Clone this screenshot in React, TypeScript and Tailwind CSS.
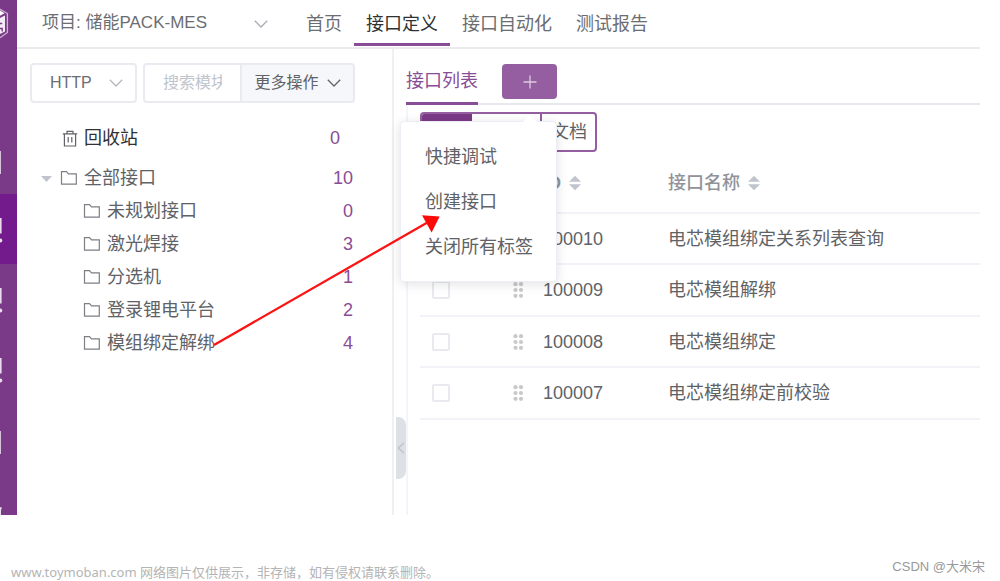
import type { JSX } from 'react';
import clsx from 'clsx';

interface IModule {
  name: string;
  count: number;
}

interface IApiRow {
  id: string;
  name: string;
}

const NAV_TABS = ['首页', '接口定义', '接口自动化', '测试报告'];
const ACTIVE_NAV = '接口定义';

const MODULES: IModule[] = [
  { name: '未规划接口', count: 0 },
  { name: '激光焊接', count: 3 },
  { name: '分选机', count: 1 },
  { name: '登录锂电平台', count: 2 },
  { name: '模组绑定解绑', count: 4 }
];

const API_ROWS: IApiRow[] = [
  { id: '100010', name: '电芯模组绑定关系列表查询' },
  { id: '100009', name: '电芯模组解绑' },
  { id: '100008', name: '电芯模组绑定' },
  { id: '100007', name: '电芯模组绑定前校验' }
];

const MENU_ITEMS = ['快捷调试', '创建接口', '关闭所有标签'];

const SIDE_ITEMS = [
  { label: '工作台', kind: 'bar' },
  { label: '接口测试', kind: 'dot', active: true },
  { label: '测试跟踪', kind: 'dot' },
  { label: '性能测试', kind: 'dot' },
  { label: '报表', kind: 'bar' }
];

function ChevronIcon({ className }: { className?: string }): JSX.Element {
  return (
    <svg
      className={clsx('h-2 w-3.5 shrink-0', className)}
      viewBox="0 0 14 8"
      fill="none"
      stroke="currentColor"
      strokeWidth="1.3"
      aria-hidden="true"
    >
      <path d="M.8.8L7 7 13.2.8" />
    </svg>
  );
}

function FolderIcon(): JSX.Element {
  return (
    <svg className="mb-0.5 h-4 w-[18px] shrink-0" viewBox="0 0 18 16" fill="none" stroke="#7d7f83" strokeWidth="1.2" aria-hidden="true">
      <path d="M1.5 1.6h5l2 2.2h7.8v10.4H1.5z" />
    </svg>
  );
}

function TrashIcon(): JSX.Element {
  return (
    <svg className="h-[18px] w-4 shrink-0" viewBox="0 0 16 18" fill="none" stroke="#606266" strokeWidth="1.2" aria-hidden="true">
      <path d="M.8 3.8h14.4M5 3.6V1.4h6v2.2M2.4 4v12h11.2V4M6.2 7v5.5M9.8 7v5.5" />
    </svg>
  );
}

function SortIcon(): JSX.Element {
  return (
    <svg className="h-4 w-3" viewBox="0 0 12 16" fill="#c0c4cc" aria-hidden="true">
      <path d="M6 .8l6 6H0zM6 15.2l6-6H0z" />
    </svg>
  );
}

function DragIcon(): JSX.Element {
  return (
    <svg className="h-4 w-[11px]" viewBox="0 0 11 16" fill="#c9c9cb" aria-hidden="true">
      {[2.2, 8, 13.8].map((y) => (
        <g key={y}>
          <circle cx="2.5" cy={y} r="2.1" />
          <circle cx="8" cy={y} r="2.1" />
        </g>
      ))}
    </svg>
  );
}

function Sidebar(): JSX.Element {
  return (
    <nav className="flex w-[17px] shrink-0 flex-col overflow-hidden bg-[#7b3a87]" aria-label="主菜单">
      <svg className="h-[124px] w-[17px] shrink-0" viewBox="0 0 17 124" fill="none" aria-hidden="true">
        <path d="M-8 14L0 9.2l7.4 4.3v19L0 37.8" stroke="#cdb2d3" strokeWidth="1.3" />
        <path d="M0 10.5l4.5 2.8L0 15.8z" fill="#fff" />
        <path d="M0 18l5-2.6v16L0 34z" fill="#f3ebf5" />
        <path d="M0 23.5h2.2M0 28.5h2.2v3" stroke="#7b3a87" strokeWidth="1.4" />
      </svg>
      {SIDE_ITEMS.map((item) => (
        <button
          key={item.label}
          aria-label={item.label}
          className={clsx('h-[70px] shrink-0', item.active && 'bg-[#731a8c]')}
        >
          <svg className="h-[70px] w-[17px]" viewBox="0 0 17 70" aria-hidden="true">
            {item.kind === 'bar' ? (
              <path d="M0 27h1v23H0z" fill="#d9c4dd" />
            ) : (
              <g fill="#e9dcec">
                <path d="M0 24h1.6v15.5H0z" />
                <circle cx="0.4" cy="46.5" r="1.9" />
              </g>
            )}
          </svg>
        </button>
      ))}
      <button aria-label="系统设置" className="flex flex-1 flex-col justify-end">
        <svg className="h-2 w-[17px]" viewBox="0 0 17 8" aria-hidden="true">
          <path d="M0 0l2 .8L1 3v5H0z" fill="#e9dcec" />
        </svg>
      </button>
    </nav>
  );
}

function Header(): JSX.Element {
  return (
    <header className="flex h-[49px] shrink-0 border-b-2 border-[#ebebed]">
      <div className="relative ml-[25px] flex w-[252px] items-center">
        <select
          aria-label="项目"
          className="h-10 w-[232px] appearance-none bg-transparent text-[17px] text-[#6b6d71] outline-none"
        >
          <option>项目: 储能PACK-MES</option>
        </select>
        <ChevronIcon className="pointer-events-none absolute right-[26px] text-[#a9acb3]" />
      </div>
      <nav className="flex" aria-label="接口测试">
        {NAV_TABS.map((tab) => (
          <a
            key={tab}
            href="#"
            className={clsx(
              'flex h-[46px] items-center border-b-3 px-3 pt-1',
              tab === ACTIVE_NAV ? 'border-[#884d96] text-[#303133]' : 'border-transparent text-[#6b6d71]'
            )}
          >
            {tab}
          </a>
        ))}
      </nav>
    </header>
  );
}

function ModulePanel(): JSX.Element {
  return (
    <aside className="w-[377px] shrink-0 border-r-2 border-[#f0f0f2] pt-3.5 pl-[13px]">
      <div className="flex gap-1.5 text-base">
        <div className="relative">
          <select
            aria-label="协议"
            className="h-10 w-[107px] appearance-none rounded border-2 border-[#e9ebf0] pl-[18px] text-[#6b6d71] outline-none"
          >
            <option>HTTP</option>
          </select>
          <ChevronIcon className="pointer-events-none absolute top-4 right-3.5 text-[#b4b7bd]" />
        </div>
        <div className="flex h-10 w-[212px] overflow-hidden rounded border-2 border-[#e9ebf0]">
          <input
            aria-label="搜索模块"
            placeholder="搜索模块"
            className="w-[95px] min-w-0 px-[18px] text-[#606266] outline-none placeholder:text-[#c0c4cc]"
          />
          <button className="flex flex-1 items-center justify-center gap-2 border-l-2 border-[#e9ebf0] bg-[#f5f7fa] text-[#606266]">
            更多操作
            <ChevronIcon />
          </button>
        </div>
      </div>

      <ul className="mt-[19px] leading-[33px] text-[#606266]">
        <li className="flex items-center pr-[52px] pl-8">
          <TrashIcon />
          <span className="ml-1.5 flex-1 text-[#303133]">回收站</span>
          <span className="text-[#884d96]">0</span>
        </li>
        <li className="mt-[7px]">
          <div className="flex items-center pr-[39px] pl-[11px]">
            <svg className="h-1.5 w-[11px]" viewBox="0 0 11 6" fill="#c0c4cc" aria-hidden="true">
              <path d="M0 0h11L5.5 6z" />
            </svg>
            <span className="ml-2 flex flex-1 items-center gap-1.5">
              <FolderIcon />
              全部接口
            </span>
            <span className="text-[#884d96]">10</span>
          </div>
          <ul>
            {MODULES.map((module) => (
              <li key={module.name} className="flex items-center gap-1.5 pr-[39px] pl-[53px]">
                <FolderIcon />
                <span className="flex-1">{module.name}</span>
                <span className="text-[#884d96]">{module.count}</span>
              </li>
            ))}
          </ul>
        </li>
      </ul>
    </aside>
  );
}

function TabMenu(): JSX.Element {
  return (
    <div className="absolute top-[57px] right-0 z-10 w-[157px] rounded border border-[#ebeef5] bg-white py-3 shadow-[0_2px_12px_rgba(0,0,0,0.12)]">
      <svg className="absolute -top-[7px] left-[121px] h-2 w-4" viewBox="0 0 16 8" aria-hidden="true">
        <path d="M0 8l8-8 8 8z" fill="#fff" />
      </svg>
      {MENU_ITEMS.map((item) => (
        <button key={item} className="block h-[45px] w-full pl-6 text-left whitespace-nowrap text-[#606266]">
          {item}
        </button>
      ))}
    </div>
  );
}

function ApiTable(): JSX.Element {
  return (
    <table className="w-full table-fixed text-left text-[#606266]">
      <colgroup>
        <col className="w-[81px]" />
        <col className="w-[30px]" />
        <col className="w-[125px]" />
        <col />
      </colgroup>
      <thead>
        <tr className="h-[61px] border-b-2 border-[#f2f3f9] text-[#909399]">
          <th aria-label="选择" />
          <th aria-label="排序" />
          <th className="px-3 pt-0.5 font-bold">
            <span className="flex items-center gap-2">ID <SortIcon /></span>
          </th>
          <th className="px-3 pt-0.5 font-medium">
            <span className="flex items-center gap-2">接口名称 <SortIcon /></span>
          </th>
        </tr>
      </thead>
      <tbody>
        {API_ROWS.map((row) => (
          <tr key={row.id} className="border-b-2 border-[#f2f3f9] odd:h-[51px] even:h-[52px]">
            <td className="px-3">
              <input
                type="checkbox"
                aria-label={`选择 ${row.id}`}
                className="block size-[18px] appearance-none rounded-xs border-2 border-[#e9eaf0] bg-white"
              />
            </td>
            <td className="pl-3"><DragIcon /></td>
            <td className="px-3">{row.id}</td>
            <td className="px-3">{row.name}</td>
          </tr>
        ))}
      </tbody>
    </table>
  );
}

function ApiPanel(): JSX.Element {
  return (
    <main className="relative flex min-w-0 flex-1 flex-col pl-3">
      <div className="flex h-14 shrink-0 items-start border-b-2 border-[#e6e9ee]">
        <a href="#" className="flex h-14 items-center border-b-3 border-[#884d96] pt-2.5 text-[#884d96]">
          接口列表
        </a>
        <div className="relative mt-[15px] ml-6">
          <button aria-label="新增标签" className="flex h-[35px] w-[55px] items-center justify-center rounded bg-[#945ea0]">
            <svg className="size-3.5" viewBox="0 0 14 14" stroke="#dccae0" strokeWidth="1.3" aria-hidden="true">
              <path d="M7 .5v13M.5 7h13" />
            </svg>
          </button>
          <TabMenu />
        </div>
      </div>

      <div className="flex-1 border-l-2 border-[#f4f4fa] pt-[7px] pl-3">
        <div className="flex h-10 w-[177px] overflow-hidden rounded border-2 border-[#945ea0]">
          <button aria-label="接口" className="w-[50px] bg-[#7b3a87]" />
          <button aria-label="用例" className="w-[70px] border-r-2 border-[#945ea0]" />
          <button className="flex-1 pr-2 text-right text-[#606266]">文档</button>
        </div>
        <ApiTable />
      </div>

      {/* Handle that folds the module tree */}
      <button
        aria-label="收起"
        className="absolute bottom-9 left-0.5 flex h-[62px] w-2.5 items-center justify-center rounded-r-lg bg-[#dde1e6]"
      >
        <svg className="h-3 w-2" viewBox="0 0 8 12" fill="none" stroke="#c0c4c9" strokeWidth="1.5" aria-hidden="true">
          <path d="M7 .8L1.5 6 7 11.2" />
        </svg>
      </button>
    </main>
  );
}

export default function App(): JSX.Element {
  return (
    <div className="flex min-h-screen flex-col bg-white font-['Liberation_Sans','Noto_Sans_CJK_SC',sans-serif] text-lg">
      <div className="relative mr-5 flex flex-1">
        <Sidebar />
        <div className="flex min-w-0 flex-1 flex-col">
          <Header />
          <div className="flex flex-1">
            <ModulePanel />
            <ApiPanel />
          </div>
        </div>

        {/* Arrow from the module to the menu entry */}
        <svg className="pointer-events-none absolute top-[210px] left-[210px] z-20 h-[140px] w-60" viewBox="210 210 240 140" aria-hidden="true">
          <path d="M214 345L430 221" stroke="#fb1414" strokeWidth="2.3" />
          <path d="M422 215.3l17.6 1.2-8 16z" fill="#fb0a0a" />
        </svg>
      </div>

      <footer className="flex h-[66px] shrink-0 justify-between pr-[15px] pl-[11px] text-[13px] leading-[18px]">
        <p className="self-end font-['Noto_Sans','Noto_Sans_CJK_SC',sans-serif] text-[#b4b4b4]">
          www.toymoban.com 网络图片仅供展示，非存储，如有侵权请联系删除。
        </p>
        <p className="mt-[43px] text-[#999]">CSDN @大米宋</p>
      </footer>
    </div>
  );
}
